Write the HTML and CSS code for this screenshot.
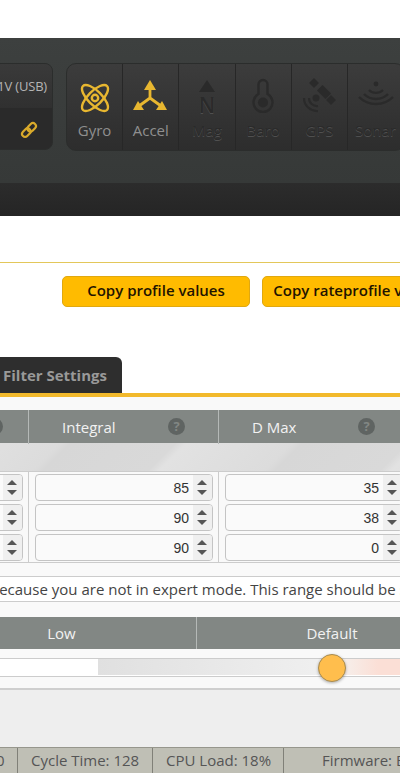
FILE: index.html
```html
<!DOCTYPE html>
<html lang="en">
<head>
    <meta charset="UTF-8">
    <meta name="viewport" content="width=device-width, initial-scale=1.0">
    <title>PID Tuning</title>
    <link rel="stylesheet" href="styles.css">
</head>
<body>

<div class="top-gap"></div>

<header class="header">
    <div class="header-main">
        <div class="conn-box">
            <div class="conn-top">16.1V (USB)</div>
            <div class="conn-bottom">
                <svg class="link-icon" width="18" height="18" viewBox="0 0 18 18">
                    <g fill="none" stroke="#d9aa2b" stroke-width="2.2" transform="rotate(-45 9 9)">
                        <rect x="0.5" y="6" width="9.5" height="6" rx="3"/>
                        <rect x="8" y="6" width="9.5" height="6" rx="3"/>
                    </g>
                </svg>
            </div>
        </div>
        <div class="sensors">
            <div class="sensor on">
                <svg class="gyro" width="30" height="34" viewBox="0 -2 30 34">
                    <g fill="none" stroke="#e8b730" stroke-width="2.4">
                        <ellipse cx="15" cy="15" rx="17" ry="7" transform="rotate(45 15 15)"/>
                        <ellipse cx="15" cy="15" rx="17" ry="7" transform="rotate(-45 15 15)"/>
                        <circle cx="15" cy="15" r="3.2"/>
                    </g>
                </svg>
                <span>Gyro</span>
            </div>
            <div class="sensor on">
                <svg class="accel" width="36" height="34" viewBox="0 0 36 34">
                    <g fill="none" stroke="#e8b730" stroke-width="2.8">
                        <path d="M18 8V19M18 19L7 27M18 19L29 27"/>
                    </g>
                    <g fill="#e8b730">
                        <path d="M18 1L24 11H12Z"/>
                        <path d="M1 31L12 31L6 22Z"/>
                        <path d="M35 31L24 31L30 22Z"/>
                    </g>
                </svg>
                <span>Accel</span>
            </div>
            <div class="sensor">
                <svg width="24" height="34" viewBox="0 0 24 34">
                    <path d="M12 1L20 13H4Z" fill="#2a2a2a"/>
                    <text x="12" y="34" class="mag-letter">N</text>
                </svg>
                <span>Mag</span>
            </div>
            <div class="sensor">
                <svg width="24" height="34" viewBox="0 0 24 34">
                    <g fill="none" stroke="#2a2a2a" stroke-width="2.4">
                        <path d="M7.5 15V5.5a4.5 4.5 0 0 1 9 0V15a9.5 9.5 0 1 1-9 0Z"/>
                    </g>
                    <circle cx="12" cy="23.5" r="5" fill="#2a2a2a"/>
                </svg>
                <span>Baro</span>
            </div>
            <div class="sensor">
                <svg width="34" height="34" viewBox="0 0 34 34">
                    <g fill="#2a2a2a">
                        <rect x="8.5" y="0.5" width="7" height="7" transform="rotate(45 12 4)"/>
                        <rect x="16" y="9" width="12" height="8" transform="rotate(45 22 13)"/>
                        <rect x="25.5" y="17.5" width="7" height="7" transform="rotate(45 29 21)"/>
                        <circle cx="14" cy="19" r="3.5"/>
                    </g>
                    <g fill="none" stroke="#2a2a2a" stroke-width="2.2">
                        <path d="M2 19a13 13 0 0 0 14 13"/>
                        <path d="M7 19a8 8 0 0 0 9 8"/>
                    </g>
                </svg>
                <span>GPS</span>
            </div>
            <div class="sensor">
                <svg width="38" height="34" viewBox="0 -5 38 34">
                    <circle cx="19" cy="0" r="2.4" fill="#2a2a2a"/>
                    <g fill="none" stroke="#2a2a2a" stroke-width="2.4">
                        <path d="M12 6a10 10 0 0 0 14 0"/>
                        <path d="M7 10a17 17 0 0 0 24 0"/>
                        <path d="M2 13a24 24 0 0 0 34 0"/>
                    </g>
                </svg>
                <span>Sonar</span>
            </div>
        </div>
    </div>
    <div class="header-sub"></div>
</header>

<main class="page">
    <div class="title-rule"></div>
    <div class="copy-buttons">
        <button class="copy-btn first">Copy profile values</button>
        <button class="copy-btn">Copy rateprofile values</button>
    </div>

    <div class="tabs">
        <div class="tab">Filter Settings</div>
    </div>

    <section class="panel">
        <div class="panel-body">
            <div class="pid-table">
                <div class="pid-head">
                    <div class="pid-th"><i class="help near">?</i></div>
                    <div class="pid-th">Integral<i class="help">?</i></div>
                    <div class="pid-th">D Max<i class="help">?</i></div>
                </div>
                <div class="pid-stripe"></div>
                <div class="pid-row">
                    <div class="pid-td"><div class="num"><b></b><em class="spin"></em></div></div>
                    <div class="pid-td"><div class="num"><b>85</b><em class="spin"></em></div></div>
                    <div class="pid-td"><div class="num"><b>35</b><em class="spin"></em></div></div>
                </div>
                <div class="pid-row">
                    <div class="pid-td"><div class="num"><b></b><em class="spin"></em></div></div>
                    <div class="pid-td"><div class="num"><b>90</b><em class="spin"></em></div></div>
                    <div class="pid-td"><div class="num"><b>38</b><em class="spin"></em></div></div>
                </div>
                <div class="pid-row">
                    <div class="pid-td"><div class="num"><b></b><em class="spin"></em></div></div>
                    <div class="pid-td"><div class="num"><b>90</b><em class="spin"></em></div></div>
                    <div class="pid-td"><div class="num"><b>0</b><em class="spin"></em></div></div>
                </div>
            </div>

            <div class="notice"><span>because you are not in expert mode. This range should be safe for most quads</span></div>

            <div class="slider-head">
                <div class="slider-th">Low</div>
                <div class="slider-th">Default</div>
            </div>
            <div class="slider-wrap">
                <div class="slider-track">
                    <div class="slider-fill"></div>
                    <div class="slider-thumb"></div>
                </div>
            </div>
        </div>
    </section>
</main>

<footer class="status">
    <div class="stat first">0</div>
    <div class="stat">Cycle Time: 128</div>
    <div class="stat">CPU Load: 18%</div>
    <div class="stat fw">Firmware: BTFL 4.2.0</div>
</footer>

</body>
</html>
```

FILE: styles.css
```css
html, body {
    margin: 0;
    height: 773px;
    overflow: hidden;
}
body {
    width: 400px;
    display: flex;
    flex-direction: column;
    background-color: #fff;
    font-family: "Open Sans", sans-serif;
    font-size: 15px;
}
.top-gap {
    height: 38px;
    flex: none;
}

/* header */
.header {
    flex: none;
    height: 178px;
    background-color: #3d403f;
}
.header-main {
    height: 145px;
    box-sizing: border-box;
    padding-top: 25px;
    display: flex;
    gap: 13px;
    background: linear-gradient(#3d403f, #363938);
}
.header-sub {
    height: 33px;
    background: linear-gradient(#2c2c2c, #252525);
}
.conn-box {
    flex: none;
    width: 130px;
    height: 87px;
    margin-left: -77px;
    border-radius: 8px;
    border: 1px solid #2b2d2c;
    box-sizing: border-box;
    overflow: hidden;
    background-color: #333;
}
.conn-top {
    height: 44px;
    line-height: 44px;
    text-align: right;
    padding-right: 5px;
    color: #b5b5b5;
    font-size: 13px;
    letter-spacing: -0.2px;
    background: linear-gradient(#3a3a3a, #303030);
}
.conn-bottom {
    height: 43px;
    display: flex;
    justify-content: flex-end;
    align-items: center;
    padding-right: 14px;
    background-color: #2a2a2a;
}
.sensors {
    flex: none;
    display: flex;
    height: 88px;
    box-sizing: border-box;
    border: 1px solid #2b2d2c;
    border-radius: 10px;
    overflow: hidden;
    background: linear-gradient(#3c3c3c, #2d2d2d);
}
.sensor {
    width: 56.2px;
    box-sizing: border-box;
    border-right: 1px solid #272727;
    display: flex;
    flex-direction: column;
    align-items: center;
    justify-content: flex-end;
    padding-bottom: 10px;
    color: #2a2a2a;
    text-shadow: 0 1px 0 #505050;
}
.sensor svg {
    margin-bottom: 7px;
    overflow: visible;
}
.sensor svg.gyro {
    margin-bottom: 5px;
}
.sensor svg.accel {
    margin-right: 2px;
}
.sensor.on {
    color: #8f8f8f;
    text-shadow: none;
}
.mag-letter {
    font-family: "Open Sans", sans-serif;
    font-size: 21px;
    font-weight: 600;
    text-anchor: middle;
    fill: #2a2a2a;
}

/* page */
.page {
    flex: 1;
    padding-top: 46px;
    background-color: #fff;
    display: flex;
    flex-direction: column;
    min-height: 0;
}
.title-rule {
    height: 1px;
    background-color: #e3c75a;
}
.copy-buttons {
    display: flex;
    gap: 12px;
    margin-top: 13px;
    padding-left: 62px;
}
.copy-btn {
    flex: none;
    height: 31px;
    padding: 0 0 3px;
    width: 188px;
    border: 1px solid #e0a810;
    border-radius: 5px;
    background-color: #ffbb00;
    color: #1f1400;
    font-family: "Open Sans", sans-serif;
    font-size: 15px;
    font-weight: 600;
    white-space: nowrap;
}
.copy-btn:not(.first) {
    width: 190px;
}
.tabs {
    margin-top: 50px;
    height: 36px;
    display: flex;
}
.tab {
    width: 119px;
    padding-left: 3px;
    line-height: 36px;
    background-color: #2e2e2e;
    border-top-right-radius: 6px;
    color: #999;
    font-weight: 700;
}

/* panel */
.panel {
    flex: 1;
    border-top: 4px solid #f2b92c;
    background-color: #eee;
}
.panel-body {
    background-color: #f9f9f9;
    padding-top: 13px;
}
.pid-table {
    width: 570px;
    margin-left: -161px;
    border-bottom: 1px solid #ccc;
}
.pid-head, .pid-row {
    display: grid;
    grid-template-columns: repeat(3, 190px);
}
.pid-head {
    height: 33px;
    background-color: #828784;
    color: #f2f2f2;
}
.pid-th {
    position: relative;
    box-sizing: border-box;
    border-right: 1px solid #b5b9b7;
    line-height: 34px;
    padding-left: 33px;
}
.help {
    position: absolute;
    right: 33px;
    top: 8px;
    width: 17px;
    height: 17px;
    border-radius: 50%;
    background-color: #5f6462;
    color: #828784;
    font: 700 13px/17px "Open Sans", sans-serif;
    text-align: center;
}
.help.near {
    right: 25px;
}
.pid-stripe {
    height: 29px;
    background: repeating-linear-gradient(135deg, #d7d7d7 0, #d9d9d9 74px, #e2e2e2 82px, #dcdcdc 156px, #d7d7d7 164px);
    border-bottom: 1px solid #ccc;
    box-sizing: border-box;
}
.pid-row {
    height: 30px;
}
.pid-td {
    box-sizing: border-box;
    border-right: 1px solid #ccc;
    padding: 2px 5px 1px 6px;
}
.num {
    height: 27px;
    box-sizing: border-box;
    border: 1px solid #c4c4c4;
    border-radius: 4px;
    background-color: #fafafa;
    display: flex;
    justify-content: flex-end;
    align-items: center;
    overflow: hidden;
}
.num b {
    font: 400 14px "Liberation Sans", Arial, sans-serif;
    color: #333;
    padding-right: 4px;
}
.spin {
    flex: none;
    width: 19px;
    height: 25px;
    position: relative;
    background-color: #efefef;
}
.spin::before, .spin::after {
    content: "";
    position: absolute;
    left: 4px;
    border-left: 5px solid transparent;
    border-right: 5px solid transparent;
}
.spin::before {
    top: 5px;
    border-bottom: 5px solid #555;
}
.spin::after {
    bottom: 5px;
    border-top: 5px solid #555;
}

.notice {
    margin-top: 13px;
    height: 26px;
    box-sizing: border-box;
    border-top: 1px solid #ccc;
    border-bottom: 1px solid #ccc;
    background-color: #fff;
    line-height: 25px;
    white-space: nowrap;
    color: #444;
}
.notice span {
    margin-left: -10px;
}

.slider-head {
    margin: 15px 0 0 -73px;
    width: 541px;
    height: 32px;
    display: grid;
    grid-template-columns: 270px 271px;
    background-color: #828784;
    color: #f2f2f2;
}
.slider-th {
    line-height: 32px;
    text-align: center;
    box-sizing: border-box;
    border-right: 1px solid #b5b9b7;
}
.slider-wrap {
    margin-top: 9px;
    padding-bottom: 11px;
    border-bottom: 2px solid #cfcfcf;
}
.slider-track {
    position: relative;
    height: 19px;
    box-sizing: border-box;
    border-top: 1px solid #ccc;
    border-bottom: 1px solid #ccc;
    background-color: #fff;
}
.slider-fill {
    margin-left: 98px;
    height: 16px;
    background: linear-gradient(90deg, #e0e0e0, #f0f0f0 230px, #f6efeb 245px, #fbdfd6 280px);
}
.slider-thumb {
    position: absolute;
    left: 318px;
    top: -5px;
    width: 28px;
    height: 28px;
    box-sizing: border-box;
    border: 1px solid #a98c50;
    border-radius: 50%;
    background-color: #ffbe4d;
    box-shadow: 0 1px 3px rgba(0, 0, 0, 0.3);
}

/* status bar */
.status {
    flex: none;
    height: 26px;
    display: flex;
    box-sizing: border-box;
    border-top: 1px solid #96968c;
    background-color: #bfbfb5;
    color: #555;
    white-space: nowrap;
    line-height: 25px;
}
.stat {
    flex: none;
    box-sizing: border-box;
    border-right: 1px solid #808078;
    padding-left: 13px;
}
.stat:nth-child(2) {
    width: 135px;
}
.stat:nth-child(3) {
    width: 131px;
}
.stat.first {
    width: 18px;
    padding-left: 0;
    text-indent: -4px;
}
.stat.fw {
    border-right: none;
    padding-left: 38px;
}
```
